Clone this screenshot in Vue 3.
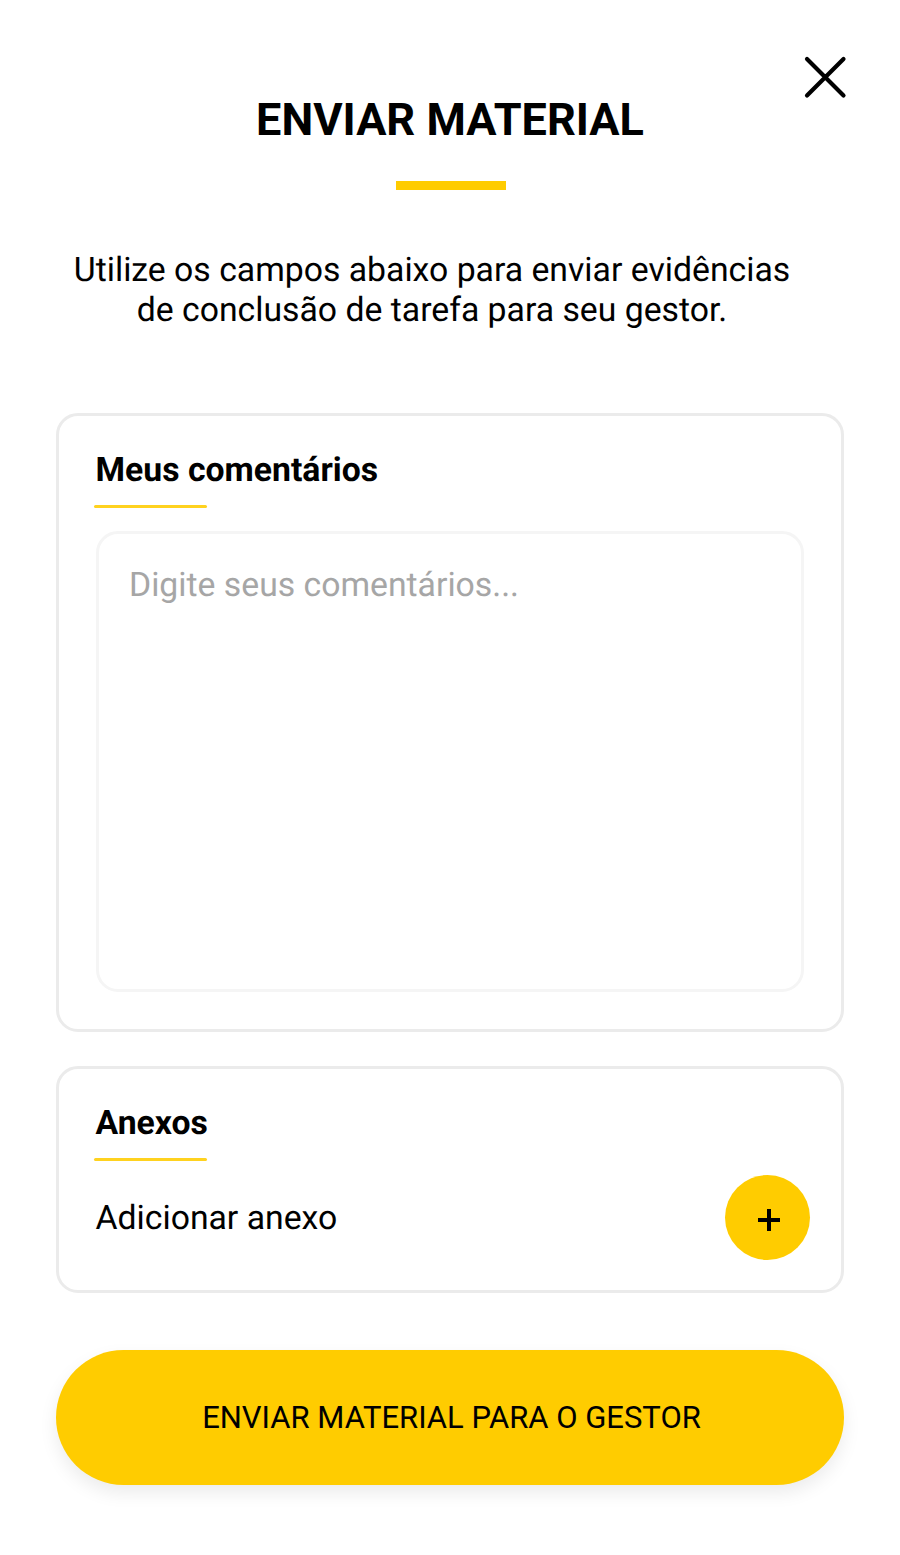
<template>
  <main class="page">
    <header class="head">
      <button class="close" aria-label="Fechar">
        <svg width="46" height="46" viewBox="0 0 46 46" fill="none" stroke="#000" stroke-width="4.2" stroke-linecap="round">
          <path d="M5 5L41.5 41.5M41.5 5L5 41.5" />
        </svg>
      </button>
      <h1 class="title">ENVIAR MATERIAL</h1>
      <div class="title-rule"></div>
      <p class="intro">Utilize os campos abaixo para enviar evidências<br />de conclusão de tarefa para seu gestor.</p>
    </header>

    <section class="card comments">
      <h2 class="card-title">Meus comentários</h2>
      <div class="card-rule"></div>
      <div class="textarea">Digite seus comentários...</div>
    </section>

    <section class="card attachments">
      <h2 class="card-title">Anexos</h2>
      <div class="card-rule"></div>
      <div class="attach-row">
        <span class="attach-label">Adicionar anexo</span>
        <button class="add" aria-label="Adicionar">
          <svg class="plus" width="24" height="24" viewBox="0 0 24 24" fill="none" stroke="#000" stroke-width="4">
            <path d="M12 1V23M1 12H23" />
          </svg>
        </button>
      </div>
    </section>

    <button class="submit">ENVIAR MATERIAL PARA O GESTOR</button>
  </main>
</template>

<script setup>
</script>

<style>
html, body { margin: 0; background: #fff; }
</style>

<style scoped>
.page {
  width: 900px;
  height: 1555px;
  box-sizing: border-box;
  padding: 0 56px;
  background: #fff;
  color: #000;
  font-family: Roboto, "Noto Sans", sans-serif;
  text-rendering: geometricPrecision;
  display: flex;
  flex-direction: column;
}
.head {
  position: relative;
  display: flex;
  flex-direction: column;
  align-items: center;
  padding-top: 94px;
}
.close {
  position: absolute;
  top: 54px;
  right: -4px;
  padding: 0;
  border: 0;
  background: none;
  line-height: 0;
}
.title {
  margin: 0;
  font-size: 45px;
  line-height: 52px;
  font-weight: 700;
  white-space: nowrap;
}
.title-rule {
  width: 110px;
  height: 9px;
  margin: 35px 0 0 2px;
  background: #ffcc00;
}
.intro {
  margin: 61px 36px 0 0;
  font-size: 33.75px;
  line-height: 39.5px;
  text-align: center;
  white-space: nowrap;
}
.card {
  box-sizing: border-box;
  border: 3px solid #ebebeb;
  border-radius: 22px;
  padding: 0 37px;
  background: #fff;
}
.comments {
  height: 619px;
  margin-top: 83px;
}
.attachments {
  height: 227px;
  margin-top: 34px;
}
.card-title {
  margin: 35px 0 0 -0.5px;
  font-size: 33.75px;
  line-height: 40px;
  font-weight: 700;
}
.card-rule {
  width: 113px;
  height: 3px;
  margin: 14px 0 0 -2px;
  background: #ffd21f;
  border-radius: 2px;
}
.textarea {
  box-sizing: border-box;
  height: 461px;
  margin-top: 23px;
  padding: 32px 30px;
  border: 3px solid #f5f5f5;
  border-radius: 22px;
  font-size: 33.75px;
  line-height: 40px;
  color: #a6a6a6;
}
.attach-row {
  display: flex;
  align-items: center;
  justify-content: space-between;
  margin: 14px -6px 0 -0.5px;
}
.attach-label {
  font-size: 33.75px;
  line-height: 40px;
  margin-top: 2px;
}
.add {
  width: 85px;
  height: 85px;
  padding: 0;
  border: 0;
  border-radius: 50%;
  background: #ffcc00;
  display: flex;
  align-items: center;
  justify-content: center;
}
.plus {
  margin: 4px 0 0 3px;
}
.submit {
  height: 135px;
  margin-top: 57px;
  padding: 0 0 0 3px;
  border: 0;
  border-radius: 67.5px;
  background: #ffcc00;
  color: #000;
  font-family: inherit;
  font-size: 31px;
  box-shadow: 0 8px 18px rgba(0, 0, 0, 0.08);
}
</style>
